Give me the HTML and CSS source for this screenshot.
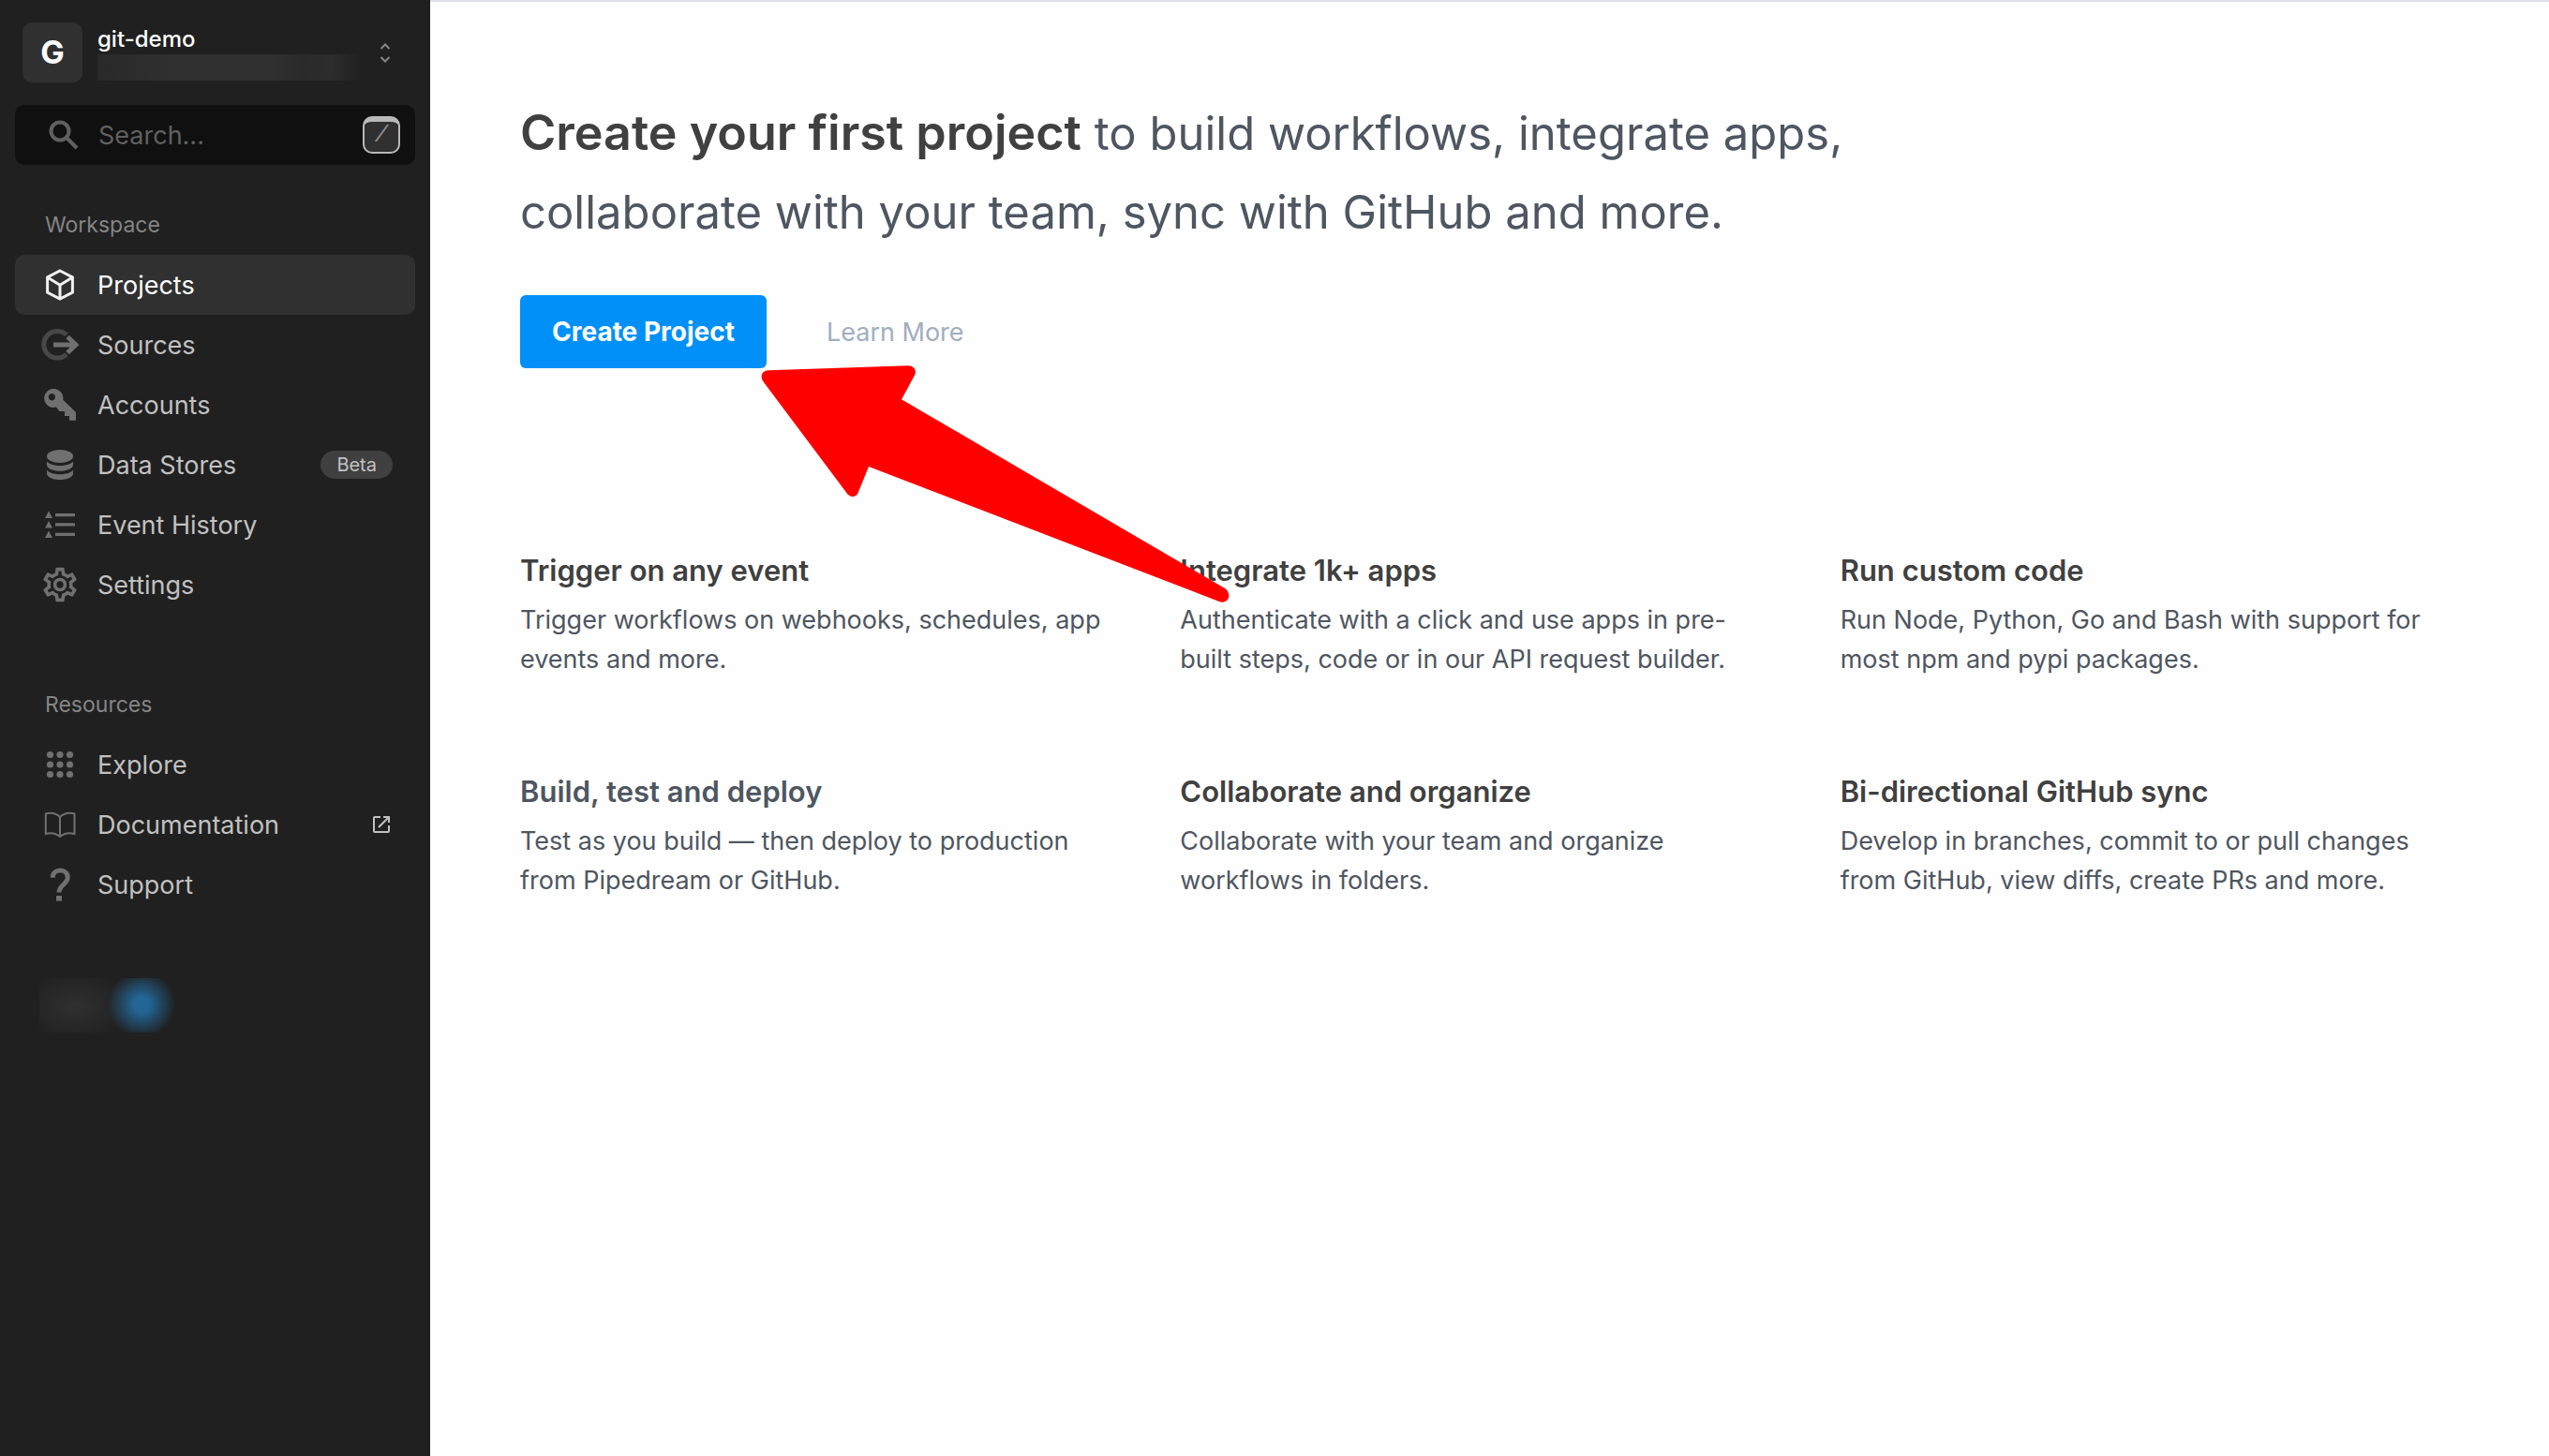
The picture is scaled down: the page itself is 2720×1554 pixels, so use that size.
FILE: index.html
```html
<!DOCTYPE html>
<html lang="en">
<head>
<meta charset="utf-8">
<title>Projects</title>
<link rel="stylesheet" href="styles.css">
</head>
<body>
<div class="app">
  <aside class="sidebar">
    <button class="account" type="button" aria-label="Switch workspace">
      <span class="avatar">G</span>
      <span class="account-text">
        <span class="account-name">git-demo</span>
        <span class="redacted"></span>
      </span>
      <svg class="switch-icon" viewBox="0 0 12 24" aria-hidden="true"><path d="M1.500 8L6 3.500 10.500 8M1.500 17L6 21.500l4.500-4.500"/></svg>
    </button>

    <label class="search">
      <svg class="search-icon" viewBox="0 0 32 32" aria-hidden="true"><circle cx="12" cy="12" r="9.500"/><path d="M19 19l11 11"/></svg>
      <input class="search-input" type="text" placeholder="Search..." aria-label="Search">
      <kbd class="search-key">/</kbd>
    </label>

    <nav class="nav" aria-labelledby="nav-workspace">
      <h2 class="nav-title" id="nav-workspace">Workspace</h2>
      <a class="nav-item is-active" href="#projects">
        <svg class="icon line" viewBox="0 0 40 40" aria-hidden="true"><path d="M20 5l13.400 7v16L20 35 6.600 28V12zM6.600 12L20 20.300 33.400 12M20 20.300V35"/></svg>
        <span class="nav-label">Projects</span>
      </a>
      <a class="nav-item" href="#sources">
        <svg class="icon" viewBox="0 0 40 40" aria-hidden="true"><path class="ring" d="M27 9.500a14.300 14.300 0 1 0 0 20.600"/><path class="arrow-line" d="M13 20h22M28 11.500l9 8.500-9 8.500"/></svg>
        <span class="nav-label">Sources</span>
      </a>
      <a class="nav-item" href="#accounts">
        <svg class="icon" viewBox="0 0 40 40" aria-hidden="true"><path fill-rule="evenodd" d="M13.300 3a10 10 0 0 1 9.900 11.800L37 28v8.800h-7V32h-5v-5h-5.500l-3.500-4.400A10 10 0 1 1 13.300 3zM11.300 8a3.700 3.700 0 1 0 .1 0z"/></svg>
        <span class="nav-label">Accounts</span>
      </a>
      <a class="nav-item" href="#data-stores">
        <svg class="icon" viewBox="0 0 40 40" aria-hidden="true"><ellipse cx="20" cy="11" rx="14" ry="7"/><path d="M6 16.500c5 6 23 6 28 0v3.500c0 9-28 9-28 0zM6 25.700c5 6 23 6 28 0v3.500c0 9-28 9-28 0z"/></svg>
        <span class="nav-label">Data Stores</span>
        <span class="badge">Beta</span>
      </a>
      <a class="nav-item" href="#event-history">
        <svg class="icon" viewBox="0 0 40 40" aria-hidden="true"><path d="M8 5.500l4 7.500H4zM8 16l4 7.500H4zM8 26.500l4 7.500H4zM15 8h21v3.300H15zM15 18.300h21v3.300H15zM15 28.700h21V32H15z"/></svg>
        <span class="nav-label">Event History</span>
      </a>
      <a class="nav-item" href="#settings">
        <svg class="icon" viewBox="1 1 22 22" aria-hidden="true"><path d="M12,8A4,4 0 0,1 16,12A4,4 0 0,1 12,16A4,4 0 0,1 8,12A4,4 0 0,1 12,8M12,10A2,2 0 0,0 10,12A2,2 0 0,0 12,14A2,2 0 0,0 14,12A2,2 0 0,0 12,10M10,22C9.750,22 9.540,21.820 9.500,21.580L9.130,18.930C8.500,18.680 7.960,18.340 7.440,17.940L4.950,18.950C4.730,19.030 4.460,18.950 4.340,18.730L2.340,15.270C2.210,15.050 2.270,14.780 2.460,14.630L4.570,12.970L4.500,12L4.570,11L2.460,9.370C2.270,9.220 2.210,8.950 2.340,8.730L4.340,5.270C4.460,5.050 4.730,4.960 4.950,5.050L7.440,6.050C7.960,5.660 8.500,5.320 9.130,5.070L9.500,2.420C9.540,2.180 9.750,2 10,2H14C14.250,2 14.460,2.180 14.500,2.420L14.870,5.070C15.500,5.320 16.040,5.660 16.560,6.050L19.050,5.050C19.270,4.960 19.540,5.050 19.660,5.270L21.660,8.730C21.790,8.950 21.730,9.220 21.540,9.370L19.430,11L19.500,12L19.430,13L21.540,14.630C21.730,14.780 21.790,15.050 21.660,15.270L19.660,18.730C19.540,18.950 19.270,19.040 19.050,18.950L16.560,17.950C16.040,18.340 15.500,18.680 14.870,18.930L14.500,21.580C14.460,21.820 14.250,22 14,22H10M11.250,4L10.880,6.610C9.680,6.860 8.620,7.500 7.850,8.390L5.440,7.350L4.690,8.650L6.800,10.200C6.400,11.370 6.400,12.640 6.800,13.800L4.680,15.360L5.430,16.660L7.860,15.620C8.630,16.500 9.680,17.140 10.870,17.380L11.240,20H12.760L13.130,17.390C14.320,17.140 15.370,16.500 16.140,15.620L18.570,16.660L19.320,15.360L17.200,13.810C17.600,12.640 17.600,11.370 17.200,10.200L19.310,8.650L18.560,7.350L16.150,8.390C15.380,7.500 14.320,6.860 13.120,6.620L12.750,4H11.250Z"/></svg>
        <span class="nav-label">Settings</span>
      </a>
    </nav>

    <nav class="nav nav-resources" aria-labelledby="nav-resources">
      <h2 class="nav-title" id="nav-resources">Resources</h2>
      <a class="nav-item" href="#explore">
        <svg class="icon" viewBox="0 0 40 40" aria-hidden="true"><circle cx="9.500" cy="9.500" r="3.600"/><circle cx="20" cy="9.500" r="3.600"/><circle cx="30.500" cy="9.500" r="3.600"/><circle cx="9.500" cy="20" r="3.600"/><circle cx="20" cy="20" r="3.600"/><circle cx="30.500" cy="20" r="3.600"/><circle cx="9.500" cy="30.500" r="3.600"/><circle cx="20" cy="30.500" r="3.600"/><circle cx="30.500" cy="30.500" r="3.600"/></svg>
        <span class="nav-label">Explore</span>
      </a>
      <a class="nav-item" href="#documentation">
        <svg class="icon line thin" viewBox="0 0 40 40" aria-hidden="true"><path d="M20 12C16 8 10 7 4.800 8.500V30c5.200-1.500 11.200-.5 15.200 3 4-3.500 10-4.500 15.500-3V8.500C30 7 24 8 20 12zM20 12v21"/></svg>
        <span class="nav-label">Documentation</span>
        <svg class="external" viewBox="0 0 18 18" aria-hidden="true"><path d="M8 1H2a1 1 0 0 0-1 1v14a1 1 0 0 0 1 1h14a1 1 0 0 0 1-1v-6M11 1h6v6M17 1L6 12"/></svg>
      </a>
      <a class="nav-item" href="#support">
        <svg class="icon" viewBox="0 0 40 40" aria-hidden="true"><path class="hook" d="M12.200 12.700C12.200 8 15.500 4.900 20.200 4.900s8 3.200 8 7.700c0 7-9.200 8-9.200 16"/><path d="M16 32h6v5.700h-6z"/></svg>
        <span class="nav-label">Support</span>
      </a>
    </nav>

    <div class="usage" aria-hidden="true"></div>
  </aside>

  <main class="main">
    <h1 class="headline"><strong>Create your first project</strong> to build workflows, integrate apps, collaborate with your team, sync with GitHub and more.</h1>

    <div class="actions">
      <button class="primary" type="button">Create Project</button>
      <a class="secondary" href="#learn-more">Learn More</a>
      <svg class="pointer" viewBox="811 388 502 256" aria-hidden="true"><path d="M820 394.200L969 389.200C975 389 978.500 394 976 399.500L962 425.300 1308 627.500C1315 634 1310 644.500 1301 641L927 497 916 524C914 530.500 906.500 530.500 903 524.500L815 407C810 400 813.500 394.500 820 394.200Z"/></svg>
    </div>

    <div class="features">
      <section class="feature">
        <h2 class="feature-title">Trigger on any event</h2>
        <p class="feature-text">Trigger workflows on webhooks, schedules, app events and more.</p>
      </section>
      <section class="feature">
        <h2 class="feature-title">Integrate 1k+ apps</h2>
        <p class="feature-text">Authenticate with a click and use apps in pre-built steps, code or in our API request builder.</p>
      </section>
      <section class="feature">
        <h2 class="feature-title">Run custom code</h2>
        <p class="feature-text">Run Node, Python, Go and Bash with support for most npm and pypi packages.</p>
      </section>
      <section class="feature">
        <h2 class="feature-title muted">Build, test and deploy</h2>
        <p class="feature-text">Test as you build — then deploy to production from Pipedream or GitHub.</p>
      </section>
      <section class="feature">
        <h2 class="feature-title">Collaborate and organize</h2>
        <p class="feature-text">Collaborate with your team and organize workflows in folders.</p>
      </section>
      <section class="feature">
        <h2 class="feature-title">Bi-directional GitHub sync</h2>
        <p class="feature-text">Develop in branches, commit to or pull changes from GitHub, view diffs, create PRs and more.</p>
      </section>
    </div>
  </main>
</div>
</body>
</html>
```
FILE: styles.css
```css
* {
  box-sizing: border-box;
}

body {
  margin: 0;
  font-family: Inter, "Liberation Sans", sans-serif;
  font-size: 27px;
  color: #4e5661;
  background: #fefefe;
}

button,
input {
  font: inherit;
}

a {
  text-decoration: none;
}

h1,
h2,
p {
  margin: 0;
}

.app {
  display: flex;
  min-height: 100vh;
}

/* Sidebar */

.sidebar {
  flex: none;
  width: 459px;
  padding: 24px 16px;
  background: #202020;
}

.account {
  display: flex;
  align-items: center;
  width: 100%;
  padding: 0 26px 0 8px;
  border: 0;
  background: none;
  color: #fff;
  text-align: left;
}

.avatar {
  flex: none;
  width: 64px;
  border-radius: 10px;
  background: #303030;
  font-size: 34px;
  font-weight: 700;
  line-height: 64px;
  text-align: center;
}

.account-text {
  display: flex;
  flex-direction: column;
  flex: 1;
  margin-left: 16px;
}

.account-name {
  font-size: 24px;
  font-weight: 500;
  line-height: 32px;
}

.redacted {
  width: 282px;
  height: 28px;
  background: linear-gradient(90deg, #292929, #303030 30%, #303030 65%, #2a2a2a 78%, #2d2d2d 88%, #202020);
}

.switch-icon {
  flex: none;
  width: 12px;
  height: 24px;
  fill: none;
  stroke: #858585;
  stroke-width: 2;
}

.search {
  display: flex;
  align-items: center;
  height: 64px;
  margin-top: 24px;
  padding: 0 16px 0 36px;
  border-radius: 10px;
  background: #101010;
}

.search-icon {
  flex: none;
  width: 32px;
  height: 32px;
  fill: none;
  stroke: #606060;
  stroke-width: 4;
}

.search-input {
  flex: 1;
  min-width: 0;
  padding: 0 0 0 21px;
  border: 0;
  outline: 0;
  background: none;
  color: #c1c1c1;
}

.search-input::placeholder {
  color: #606060;
  opacity: 1;
}

.search-key {
  width: 40px;
  height: 40px;
  border: 2px solid #b8b8b8;
  border-top-width: 6px;
  border-radius: 10px;
  background: #303030;
  color: #909090;
  font: italic 24px/30px "Liberation Mono", monospace;
  text-align: center;
}

.nav {
  margin-top: 32px;
}

.nav-resources {
  margin-top: 64px;
}

.nav-title {
  padding-left: 32px;
  color: #858585;
  font-size: 23px;
  font-weight: 400;
  line-height: 64px;
}

.nav-item {
  display: flex;
  align-items: center;
  height: 64px;
  padding: 0 24px 0 28px;
  border-radius: 10px;
  color: #c1c1c1;
}

.nav-item.is-active {
  background: #303030;
  color: #fff;
}

.nav-label {
  flex: 1;
  margin-left: 20px;
}

.icon {
  flex: none;
  width: 40px;
  height: 40px;
  fill: #707070;
}

.icon.line {
  fill: none;
  stroke: #707070;
  stroke-width: 3;
}

.icon.thin {
  stroke-width: 2;
}

.is-active .icon.line {
  stroke: #f0f0f0;
}

.ring,
.arrow-line,
.hook {
  fill: none;
  stroke: #707070;
  stroke-width: 5;
}

.ring {
  stroke: #484848;
}

.badge {
  padding: 0 17px;
  border-radius: 15px;
  background: #404040;
  font-size: 20px;
  line-height: 30px;
}

.external {
  width: 18px;
  height: 18px;
  margin-right: 3px;
  fill: none;
  stroke: #c1c1c1;
  stroke-width: 2;
}

.usage {
  width: 168px;
  height: 58px;
  margin: 68px 0 0 26px;
  background:
    radial-gradient(circle at 109px 28px, #236696 0, #236696 8px, #23669600 36px),
    radial-gradient(ellipse 60px 40px at 38px 30px, #303030, #30303000);
}

/* Main panel */

.main {
  flex: 1;
  padding: 98px 96px;
  border-top: 2px solid #dce1e7;
}

.headline {
  max-width: 1480px;
  font-size: 49px;
  font-weight: 400;
  line-height: 84px;
}

.headline strong {
  color: #404040;
  font-size: 52px;
  font-weight: 600;
}

.actions {
  position: relative;
  display: flex;
  align-items: center;
  gap: 64px;
  margin-top: 46px;
}

.primary {
  height: 78px;
  padding: 0 34px;
  border: 0;
  border-radius: 6px;
  background: #0090f8;
  color: #fff;
  font-size: 28px;
  font-weight: 700;
}

.secondary {
  color: #a0aec0;
}

/* Red callout arrow that ends at the primary button */
.pointer {
  position: absolute;
  top: 74px;
  left: 256px;
  width: 502px;
  height: 256px;
  fill: #f00;
  pointer-events: none;
}

.features {
  display: grid;
  grid-template-columns: repeat(3, 1fr);
  gap: 96px 44px;
  margin-top: 192px;
}

.feature {
  padding-right: 32px;
}

.feature-title {
  color: #404040;
  font-size: 31px;
  font-weight: 600;
  line-height: 48px;
}

.feature-title.muted {
  color: #4e5661;
}

.feature-text {
  margin-top: 8px;
  line-height: 42px;
}
```
